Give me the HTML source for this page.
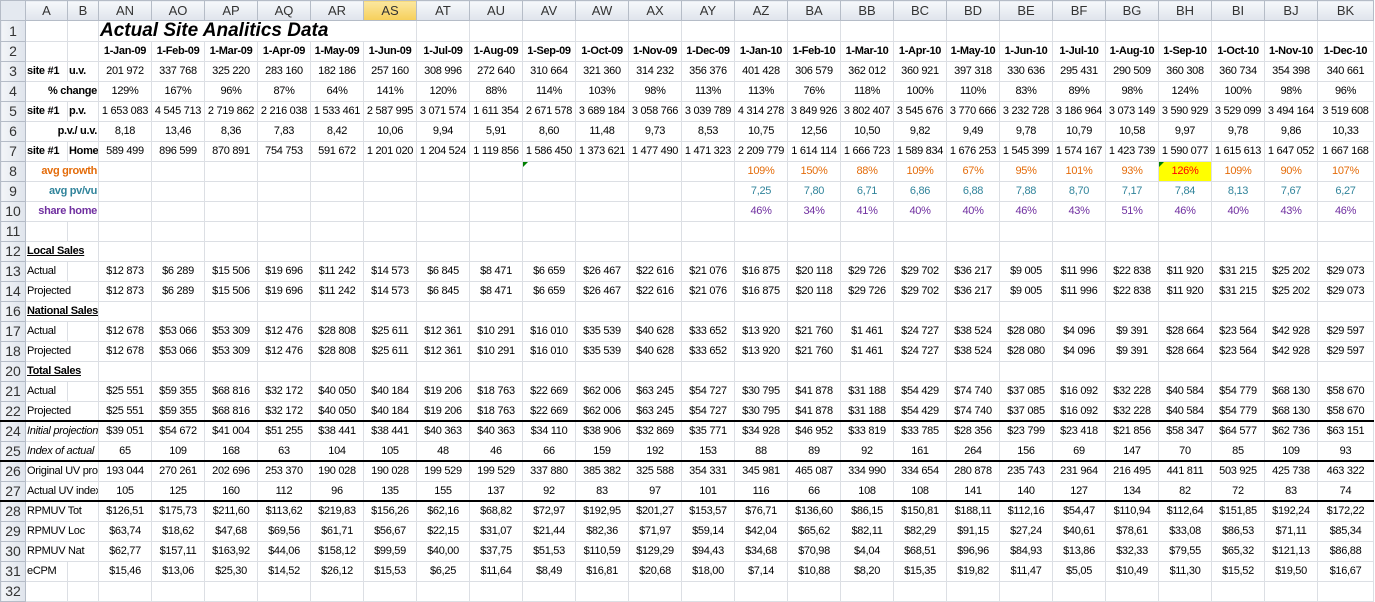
<!DOCTYPE html>
<html><head><meta charset="utf-8">
<style>
body{margin:0;background:#fff;width:1375px;height:602px;overflow:hidden}
table{border-collapse:collapse;table-layout:fixed;width:1373px;font-family:"Liberation Sans",sans-serif;font-size:11px;color:#000}
td{height:19px;line-height:17px;padding:0 1px;border:1px solid #dcdfe4;text-align:center;white-space:nowrap;overflow:hidden;letter-spacing:-0.3px}
tr.h td{background:linear-gradient(#f6f8fb,#dfe4ec);color:#333;font-size:13px;border-color:#b5bcc7;height:19px;letter-spacing:0}
tr td.r{background:linear-gradient(90deg,#f3f5f8,#dfe4ec);color:#333;font-size:14px;font-weight:normal;border-color:#b5bcc7;text-align:center;letter-spacing:0}
td.l{text-align:left}
td.rt{text-align:right}
td.b{font-weight:bold}
tr.d td{font-weight:bold;font-size:11px}
tr.o td{color:#e46c0a}
tr.t td{color:#31849b}
tr.p td{color:#7030a0}
tr.k td{border-bottom:2px solid #000;height:18px}
tr.i td.lb{font-style:italic}
td.u{font-weight:bold;text-decoration:underline;text-align:left}
tr.o td.r,tr.t td.r,tr.p td.r,tr.d td.r{color:#333;font-size:14px;font-weight:normal}
.tri{position:relative}
.tri:before{content:"";position:absolute;left:0;top:0;border-top:5px solid #008000;border-right:5px solid transparent}
</style></head><body>
<table>
<colgroup><col style="width:25px"><col style="width:42px"><col style="width:31px">
<col span="23" style="width:53px"><col style="width:56px"></colgroup>
<tr class="h"><td style="background:#e4e9f0"></td><td>A</td><td>B</td><td>AN</td><td>AO</td><td>AP</td><td>AQ</td><td>AR</td><td style="background:linear-gradient(#fbe7a0,#f6cf5a)">AS</td><td>AT</td><td>AU</td><td>AV</td><td>AW</td><td>AX</td><td>AY</td><td>AZ</td><td>BA</td><td>BB</td><td>BC</td><td>BD</td><td>BE</td><td>BF</td><td>BG</td><td>BH</td><td>BI</td><td>BJ</td><td>BK</td></tr>
<tr><td class="r" style="height:20px">1</td><td></td><td></td><td colspan="6" style="text-align:left;font-weight:bold;font-style:italic;font-size:19px;line-height:18px;overflow:visible;letter-spacing:0">Actual Site Analitics Data</td><td></td><td></td><td></td><td></td><td></td><td></td><td></td><td></td><td></td><td></td><td></td><td></td><td></td><td></td><td></td><td></td><td></td><td></td></tr>
<tr class="d"><td class="r">2</td><td></td><td></td><td>1-Jan-09</td><td>1-Feb-09</td><td>1-Mar-09</td><td>1-Apr-09</td><td>1-May-09</td><td>1-Jun-09</td><td>1-Jul-09</td><td>1-Aug-09</td><td>1-Sep-09</td><td>1-Oct-09</td><td>1-Nov-09</td><td>1-Dec-09</td><td>1-Jan-10</td><td>1-Feb-10</td><td>1-Mar-10</td><td>1-Apr-10</td><td>1-May-10</td><td>1-Jun-10</td><td>1-Jul-10</td><td>1-Aug-10</td><td>1-Sep-10</td><td>1-Oct-10</td><td>1-Nov-10</td><td>1-Dec-10</td></tr>
<tr><td class="r">3</td><td class="l b">site #1</td><td class="l b">u.v.</td><td>201 972</td><td>337 768</td><td>325 220</td><td>283 160</td><td>182 186</td><td>257 160</td><td>308 996</td><td>272 640</td><td>310 664</td><td>321 360</td><td>314 232</td><td>356 376</td><td>401 428</td><td>306 579</td><td>362 012</td><td>360 921</td><td>397 318</td><td>330 636</td><td>295 431</td><td>290 509</td><td>360 308</td><td>360 734</td><td>354 398</td><td>340 661</td></tr>
<tr><td class="r">4</td><td colspan="2" class="rt b">% change</td><td>129%</td><td>167%</td><td>96%</td><td>87%</td><td>64%</td><td>141%</td><td>120%</td><td>88%</td><td>114%</td><td>103%</td><td>98%</td><td>113%</td><td>113%</td><td>76%</td><td>118%</td><td>100%</td><td>110%</td><td>83%</td><td>89%</td><td>98%</td><td>124%</td><td>100%</td><td>98%</td><td>96%</td></tr>
<tr><td class="r">5</td><td class="l b">site #1</td><td class="l b">p.v.</td><td>1 653 083</td><td>4 545 713</td><td>2 719 862</td><td>2 216 038</td><td>1 533 461</td><td>2 587 995</td><td>3 071 574</td><td>1 611 354</td><td>2 671 578</td><td>3 689 184</td><td>3 058 766</td><td>3 039 789</td><td>4 314 278</td><td>3 849 926</td><td>3 802 407</td><td>3 545 676</td><td>3 770 666</td><td>3 232 728</td><td>3 186 964</td><td>3 073 149</td><td>3 590 929</td><td>3 529 099</td><td>3 494 164</td><td>3 519 608</td></tr>
<tr><td class="r">6</td><td colspan="2" class="rt b">p.v./ u.v.</td><td>8,18</td><td>13,46</td><td>8,36</td><td>7,83</td><td>8,42</td><td>10,06</td><td>9,94</td><td>5,91</td><td>8,60</td><td>11,48</td><td>9,73</td><td>8,53</td><td>10,75</td><td>12,56</td><td>10,50</td><td>9,82</td><td>9,49</td><td>9,78</td><td>10,79</td><td>10,58</td><td>9,97</td><td>9,78</td><td>9,86</td><td>10,33</td></tr>
<tr><td class="r">7</td><td class="l b">site #1</td><td class="l b">Home</td><td>589 499</td><td>896 599</td><td>870 891</td><td>754 753</td><td>591 672</td><td>1 201 020</td><td>1 204 524</td><td>1 119 856</td><td>1 586 450</td><td>1 373 621</td><td>1 477 490</td><td>1 471 323</td><td>2 209 779</td><td>1 614 114</td><td>1 666 723</td><td>1 589 834</td><td>1 676 253</td><td>1 545 399</td><td>1 574 167</td><td>1 423 739</td><td>1 590 077</td><td>1 615 613</td><td>1 647 052</td><td>1 667 168</td></tr>
<tr class="o"><td class="r">8</td><td colspan="2" class="rt b">avg growth</td><td></td><td></td><td></td><td></td><td></td><td></td><td></td><td></td><td class="tri"></td><td></td><td></td><td></td><td>109%</td><td>150%</td><td>88%</td><td>109%</td><td>67%</td><td>95%</td><td>101%</td><td>93%</td><td class="tri" style="background:#ffff00;color:#ff0000">126%</td><td>109%</td><td>90%</td><td>107%</td></tr>
<tr class="t"><td class="r">9</td><td colspan="2" class="rt b">avg pv/vu</td><td></td><td></td><td></td><td></td><td></td><td></td><td></td><td></td><td></td><td></td><td></td><td></td><td>7,25</td><td>7,80</td><td>6,71</td><td>6,86</td><td>6,88</td><td>7,88</td><td>8,70</td><td>7,17</td><td>7,84</td><td>8,13</td><td>7,67</td><td>6,27</td></tr>
<tr class="p"><td class="r">10</td><td colspan="2" class="rt b">share home</td><td></td><td></td><td></td><td></td><td></td><td></td><td></td><td></td><td></td><td></td><td></td><td></td><td>46%</td><td>34%</td><td>41%</td><td>40%</td><td>40%</td><td>46%</td><td>43%</td><td>51%</td><td>46%</td><td>40%</td><td>43%</td><td>46%</td></tr>
<tr><td class="r">11</td><td></td><td></td><td></td><td></td><td></td><td></td><td></td><td></td><td></td><td></td><td></td><td></td><td></td><td></td><td></td><td></td><td></td><td></td><td></td><td></td><td></td><td></td><td></td><td></td><td></td><td></td></tr>
<tr><td class="r">12</td><td colspan="2" class="u">Local Sales</td><td></td><td></td><td></td><td></td><td></td><td></td><td></td><td></td><td></td><td></td><td></td><td></td><td></td><td></td><td></td><td></td><td></td><td></td><td></td><td></td><td></td><td></td><td></td><td></td></tr>
<tr><td class="r">13</td><td class="l">Actual</td><td></td><td>$12 873</td><td>$6 289</td><td>$15 506</td><td>$19 696</td><td>$11 242</td><td>$14 573</td><td>$6 845</td><td>$8 471</td><td>$6 659</td><td>$26 467</td><td>$22 616</td><td>$21 076</td><td>$16 875</td><td>$20 118</td><td>$29 726</td><td>$29 702</td><td>$36 217</td><td>$9 005</td><td>$11 996</td><td>$22 838</td><td>$11 920</td><td>$31 215</td><td>$25 202</td><td>$29 073</td></tr>
<tr><td class="r">14</td><td colspan="2" class="l">Projected</td><td>$12 873</td><td>$6 289</td><td>$15 506</td><td>$19 696</td><td>$11 242</td><td>$14 573</td><td>$6 845</td><td>$8 471</td><td>$6 659</td><td>$26 467</td><td>$22 616</td><td>$21 076</td><td>$16 875</td><td>$20 118</td><td>$29 726</td><td>$29 702</td><td>$36 217</td><td>$9 005</td><td>$11 996</td><td>$22 838</td><td>$11 920</td><td>$31 215</td><td>$25 202</td><td>$29 073</td></tr>
<tr><td class="r">16</td><td colspan="2" class="u">National Sales</td><td></td><td></td><td></td><td></td><td></td><td></td><td></td><td></td><td></td><td></td><td></td><td></td><td></td><td></td><td></td><td></td><td></td><td></td><td></td><td></td><td></td><td></td><td></td><td></td></tr>
<tr><td class="r">17</td><td class="l">Actual</td><td></td><td>$12 678</td><td>$53 066</td><td>$53 309</td><td>$12 476</td><td>$28 808</td><td>$25 611</td><td>$12 361</td><td>$10 291</td><td>$16 010</td><td>$35 539</td><td>$40 628</td><td>$33 652</td><td>$13 920</td><td>$21 760</td><td>$1 461</td><td>$24 727</td><td>$38 524</td><td>$28 080</td><td>$4 096</td><td>$9 391</td><td>$28 664</td><td>$23 564</td><td>$42 928</td><td>$29 597</td></tr>
<tr><td class="r">18</td><td colspan="2" class="l">Projected</td><td>$12 678</td><td>$53 066</td><td>$53 309</td><td>$12 476</td><td>$28 808</td><td>$25 611</td><td>$12 361</td><td>$10 291</td><td>$16 010</td><td>$35 539</td><td>$40 628</td><td>$33 652</td><td>$13 920</td><td>$21 760</td><td>$1 461</td><td>$24 727</td><td>$38 524</td><td>$28 080</td><td>$4 096</td><td>$9 391</td><td>$28 664</td><td>$23 564</td><td>$42 928</td><td>$29 597</td></tr>
<tr><td class="r">20</td><td colspan="2" class="u">Total Sales</td><td></td><td></td><td></td><td></td><td></td><td></td><td></td><td></td><td></td><td></td><td></td><td></td><td></td><td></td><td></td><td></td><td></td><td></td><td></td><td></td><td></td><td></td><td></td><td></td></tr>
<tr><td class="r">21</td><td class="l">Actual</td><td></td><td>$25 551</td><td>$59 355</td><td>$68 816</td><td>$32 172</td><td>$40 050</td><td>$40 184</td><td>$19 206</td><td>$18 763</td><td>$22 669</td><td>$62 006</td><td>$63 245</td><td>$54 727</td><td>$30 795</td><td>$41 878</td><td>$31 188</td><td>$54 429</td><td>$74 740</td><td>$37 085</td><td>$16 092</td><td>$32 228</td><td>$40 584</td><td>$54 779</td><td>$68 130</td><td>$58 670</td></tr>
<tr class="k"><td class="r">22</td><td colspan="2" class="l">Projected</td><td>$25 551</td><td>$59 355</td><td>$68 816</td><td>$32 172</td><td>$40 050</td><td>$40 184</td><td>$19 206</td><td>$18 763</td><td>$22 669</td><td>$62 006</td><td>$63 245</td><td>$54 727</td><td>$30 795</td><td>$41 878</td><td>$31 188</td><td>$54 429</td><td>$74 740</td><td>$37 085</td><td>$16 092</td><td>$32 228</td><td>$40 584</td><td>$54 779</td><td>$68 130</td><td>$58 670</td></tr>
<tr class="i"><td class="r">24</td><td colspan="2" class="l lb">Initial projection</td><td>$39 051</td><td>$54 672</td><td>$41 004</td><td>$51 255</td><td>$38 441</td><td>$38 441</td><td>$40 363</td><td>$40 363</td><td>$34 110</td><td>$38 906</td><td>$32 869</td><td>$35 771</td><td>$34 928</td><td>$46 952</td><td>$33 819</td><td>$33 785</td><td>$28 356</td><td>$23 799</td><td>$23 418</td><td>$21 856</td><td>$58 347</td><td>$64 577</td><td>$62 736</td><td>$63 151</td></tr>
<tr class="i k"><td class="r">25</td><td colspan="2" class="l lb">Index of actual</td><td>65</td><td>109</td><td>168</td><td>63</td><td>104</td><td>105</td><td>48</td><td>46</td><td>66</td><td>159</td><td>192</td><td>153</td><td>88</td><td>89</td><td>92</td><td>161</td><td>264</td><td>156</td><td>69</td><td>147</td><td>70</td><td>85</td><td>109</td><td>93</td></tr>
<tr><td class="r">26</td><td colspan="2" class="l">Original UV pro</td><td>193 044</td><td>270 261</td><td>202 696</td><td>253 370</td><td>190 028</td><td>190 028</td><td>199 529</td><td>199 529</td><td>337 880</td><td>385 382</td><td>325 588</td><td>354 331</td><td>345 981</td><td>465 087</td><td>334 990</td><td>334 654</td><td>280 878</td><td>235 743</td><td>231 964</td><td>216 495</td><td>441 811</td><td>503 925</td><td>425 738</td><td>463 322</td></tr>
<tr class="k"><td class="r">27</td><td colspan="2" class="l">Actual UV index</td><td>105</td><td>125</td><td>160</td><td>112</td><td>96</td><td>135</td><td>155</td><td>137</td><td>92</td><td>83</td><td>97</td><td>101</td><td>116</td><td>66</td><td>108</td><td>108</td><td>141</td><td>140</td><td>127</td><td>134</td><td>82</td><td>72</td><td>83</td><td>74</td></tr>
<tr><td class="r">28</td><td colspan="2" class="l">RPMUV Tot</td><td>$126,51</td><td>$175,73</td><td>$211,60</td><td>$113,62</td><td>$219,83</td><td>$156,26</td><td>$62,16</td><td>$68,82</td><td>$72,97</td><td>$192,95</td><td>$201,27</td><td>$153,57</td><td>$76,71</td><td>$136,60</td><td>$86,15</td><td>$150,81</td><td>$188,11</td><td>$112,16</td><td>$54,47</td><td>$110,94</td><td>$112,64</td><td>$151,85</td><td>$192,24</td><td>$172,22</td></tr>
<tr><td class="r">29</td><td colspan="2" class="l">RPMUV Loc</td><td>$63,74</td><td>$18,62</td><td>$47,68</td><td>$69,56</td><td>$61,71</td><td>$56,67</td><td>$22,15</td><td>$31,07</td><td>$21,44</td><td>$82,36</td><td>$71,97</td><td>$59,14</td><td>$42,04</td><td>$65,62</td><td>$82,11</td><td>$82,29</td><td>$91,15</td><td>$27,24</td><td>$40,61</td><td>$78,61</td><td>$33,08</td><td>$86,53</td><td>$71,11</td><td>$85,34</td></tr>
<tr><td class="r">30</td><td colspan="2" class="l">RPMUV Nat</td><td>$62,77</td><td>$157,11</td><td>$163,92</td><td>$44,06</td><td>$158,12</td><td>$99,59</td><td>$40,00</td><td>$37,75</td><td>$51,53</td><td>$110,59</td><td>$129,29</td><td>$94,43</td><td>$34,68</td><td>$70,98</td><td>$4,04</td><td>$68,51</td><td>$96,96</td><td>$84,93</td><td>$13,86</td><td>$32,33</td><td>$79,55</td><td>$65,32</td><td>$121,13</td><td>$86,88</td></tr>
<tr><td class="r">31</td><td class="l">eCPM</td><td></td><td>$15,46</td><td>$13,06</td><td>$25,30</td><td>$14,52</td><td>$26,12</td><td>$15,53</td><td>$6,25</td><td>$11,64</td><td>$8,49</td><td>$16,81</td><td>$20,68</td><td>$18,00</td><td>$7,14</td><td>$10,88</td><td>$8,20</td><td>$15,35</td><td>$19,82</td><td>$11,47</td><td>$5,05</td><td>$10,49</td><td>$11,30</td><td>$15,52</td><td>$19,50</td><td>$16,67</td></tr>
<tr><td class="r">32</td><td></td><td></td><td></td><td></td><td></td><td></td><td></td><td></td><td></td><td></td><td></td><td></td><td></td><td></td><td></td><td></td><td></td><td></td><td></td><td></td><td></td><td></td><td></td><td></td><td></td><td></td></tr>
</table>
</body></html>
